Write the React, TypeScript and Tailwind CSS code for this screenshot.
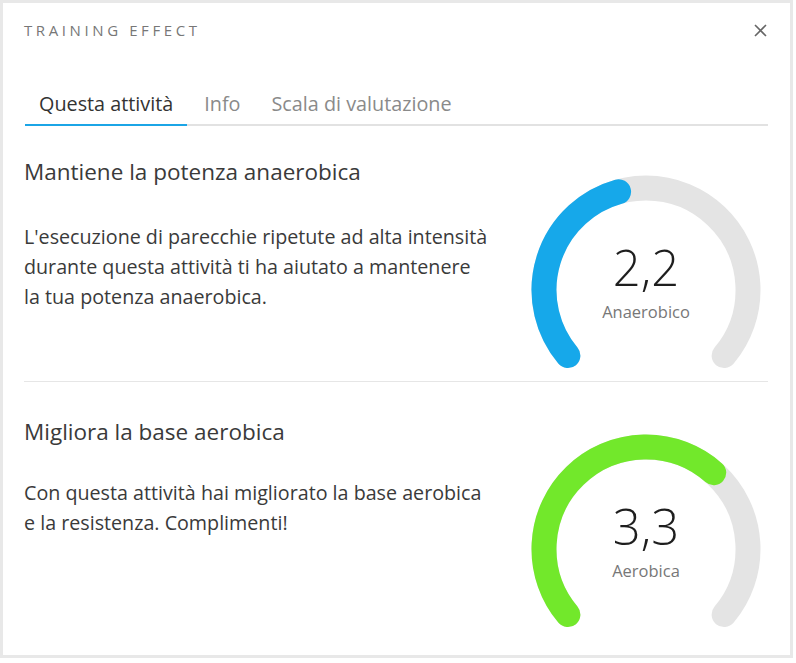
import React from "react";

type GaugeProps = {
  value: number;
  label: string;
  color: string;
};

const START = 140;
const SWEEP = 260;
const MAX = 5;

const point = (cx: number, cy: number, r: number, deg: number) => {
  const rad = (deg * Math.PI) / 180;
  return [cx + r * Math.cos(rad), cy + r * Math.sin(rad)];
};

const arc = (cx: number, cy: number, r: number, from: number, to: number) => {
  const [x1, y1] = point(cx, cy, r, from);
  const [x2, y2] = point(cx, cy, r, to);
  const large = to - from > 180 ? 1 : 0;
  return `M ${x1} ${y1} A ${r} ${r} 0 ${large} 1 ${x2} ${y2}`;
};

const Gauge = ({ value, label, color }: GaugeProps) => {
  const end = START + (SWEEP * Math.min(value, MAX)) / MAX;
  return (
    <div className="relative w-[236px] h-[200px]">
      <svg width="236" height="200" viewBox="0 0 236 200">
        <path
          d={arc(118, 116, 102, START, START + SWEEP)}
          fill="none"
          stroke="#e4e4e4"
          strokeWidth="25"
          strokeLinecap="round"
        />
        <path
          d={arc(118, 116, 102, START, end)}
          fill="none"
          stroke={color}
          strokeWidth="25"
          strokeLinecap="round"
        />
      </svg>
      <div className="absolute inset-x-0 top-[60px] flex flex-col items-center">
        <span className="text-[49px] leading-[67px] text-[#1e1e1e] font-light">
          {value.toFixed(1).replace(".", ",")}
        </span>
        <span className="text-[16.5px] leading-[22px] text-[#777]">{label}</span>
      </div>
    </div>
  );
};

const tabs = ["Questa attività", "Info", "Scala di valutazione"];

export default function App() {
  return (
    <div className="w-[796px] h-[663px] bg-white font-['Open_Sans',sans-serif]">
      <div className="w-[793px] h-[658px] border-[3px] border-[#e8e8e8] pl-[21px] pr-[22px] pt-[17px]">
        <div className="flex items-center justify-between h-5">
          <h1 className="text-[15px] leading-5 tracking-[0.24em] text-[#777]">
            TRAINING EFFECT
          </h1>
          <button className="mr-[1px] text-[#666]">
            <svg width="13" height="13" viewBox="0 0 13 13">
              <path d="M1 1 L12 12 M12 1 L1 12" stroke="currentColor" strokeWidth="1.6" />
            </svg>
          </button>
        </div>

        <div className="mt-[51px] ml-[1px] flex gap-[3px] border-b-2 border-[#e2e2e2]">
          {tabs.map((t, i) => (
            <button
              key={t}
              className={
                i === 0
                  ? "px-[14px] pb-[7px] text-[19.8px] leading-[26px] text-[#333] border-b-2 border-[#1ba5e6] -mb-[2px]"
                  : "px-[14px] pb-[7px] text-[19.8px] leading-[26px] text-[#8a8a8a] border-b-2 border-transparent -mb-[2px]"
              }
            >
              {t}
            </button>
          ))}
        </div>

        <section className="flex justify-between pb-[7px] border-b border-[#e6e6e6]">
          <div className="pt-[32px]">
            <h2 className="text-[22.5px] leading-7 text-[#3a3a3a]">Mantiene la potenza anaerobica</h2>
            <p className="mt-[36px] text-[19.7px] leading-[30px] text-[#3a3a3a]">
              L'esecuzione di parecchie ripetute ad alta intensità
              <br />
              durante questa attività ti ha aiutato a mantenere
              <br />
              la tua potenza anaerobica.
            </p>
          </div>
          <div className="pt-[48px] mr-[4px]">
            <Gauge value={2.2} label="Anaerobico" color="#16a8ea" />
          </div>
        </section>

        <section className="flex justify-between">
          <div className="pt-[36px]">
            <h2 className="text-[22.5px] leading-7 text-[#3a3a3a]">Migliora la base aerobica</h2>
            <p className="mt-[32px] text-[19.7px] leading-[30px] text-[#3a3a3a]">
              Con questa attività hai migliorato la base aerobica
              <br />
              e la resistenza. Complimenti!
            </p>
          </div>
          <div className="pt-[51px] mr-[4px]">
            <Gauge value={3.3} label="Aerobica" color="#72e82b" />
          </div>
        </section>
      </div>
    </div>
  );
}
